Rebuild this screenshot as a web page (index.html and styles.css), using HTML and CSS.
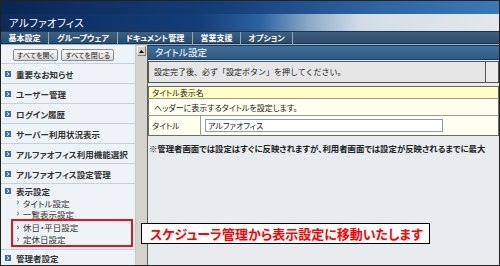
FILE: index.html
```html
<!DOCTYPE html>
<html lang="ja">
<head>
<meta charset="utf-8">
<title>アルファオフィス</title>
<link rel="stylesheet" href="styles.css">
</head>
<body>
<div class="frame">
  <div class="header"><span class="app-title">アルファオフィス</span></div>
  <div class="nav">
    <span class="nav-item w1">基本設定</span>
    <span class="nav-item w2">グループウェア</span>
    <span class="nav-item w3">ドキュメント管理</span>
    <span class="nav-item w4">営業支援</span>
    <span class="nav-item w5">オプション</span>
  </div>
  <div class="main">
    <aside class="sidebar">
      <div class="btns">
        <button class="btn">すべてを開く</button>
        <button class="btn">すべてを閉じる</button>
      </div>
      <ul class="menu">
        <li class="menu-item"><svg class="ico" viewBox="0 0 6 6"><rect x="0" y="0" width="6" height="6" fill="#3a6cae"/><polyline points="2,1.3 4,3 2,4.7" fill="none" stroke="#fff" stroke-width="1"/></svg>重要なお知らせ</li>
        <li class="menu-item"><svg class="ico" viewBox="0 0 6 6"><rect x="0" y="0" width="6" height="6" fill="#3a6cae"/><polyline points="2,1.3 4,3 2,4.7" fill="none" stroke="#fff" stroke-width="1"/></svg>ユーザー管理</li>
        <li class="menu-item"><svg class="ico" viewBox="0 0 6 6"><rect x="0" y="0" width="6" height="6" fill="#3a6cae"/><polyline points="2,1.3 4,3 2,4.7" fill="none" stroke="#fff" stroke-width="1"/></svg>ログイン履歴</li>
        <li class="menu-item"><svg class="ico" viewBox="0 0 6 6"><rect x="0" y="0" width="6" height="6" fill="#3a6cae"/><polyline points="2,1.3 4,3 2,4.7" fill="none" stroke="#fff" stroke-width="1"/></svg>サーバー利用状況表示</li>
        <li class="menu-item"><svg class="ico" viewBox="0 0 6 6"><rect x="0" y="0" width="6" height="6" fill="#3a6cae"/><polyline points="2,1.3 4,3 2,4.7" fill="none" stroke="#fff" stroke-width="1"/></svg>アルファオフィス利用機能選択</li>
        <li class="menu-item"><svg class="ico" viewBox="0 0 6 6"><rect x="0" y="0" width="6" height="6" fill="#3a6cae"/><polyline points="2,1.3 4,3 2,4.7" fill="none" stroke="#fff" stroke-width="1"/></svg>アルファオフィス設定管理</li>
        <li class="menu-group">
          <div class="menu-head"><svg class="ico" viewBox="0 0 6 6"><rect x="0" y="0" width="6" height="6" fill="#3a6cae"/><polyline points="2,1.3 4,3 2,4.7" fill="none" stroke="#fff" stroke-width="1"/></svg>表示設定</div>
          <div class="sub"><svg class="bul" viewBox="0 0 4 5"><polyline points="1,0.8 3,2.5 1,4.2" fill="none" stroke="#3f73b4" stroke-width="1"/></svg>タイトル設定</div>
          <div class="sub"><svg class="bul" viewBox="0 0 4 5"><polyline points="1,0.8 3,2.5 1,4.2" fill="none" stroke="#3f73b4" stroke-width="1"/></svg>一覧表示設定</div>
          <div class="hl">
            <div class="sub"><svg class="bul" viewBox="0 0 4 5"><polyline points="1,0.8 3,2.5 1,4.2" fill="none" stroke="#3f73b4" stroke-width="1"/></svg>休日・平日設定</div>
            <div class="sub"><svg class="bul" viewBox="0 0 4 5"><polyline points="1,0.8 3,2.5 1,4.2" fill="none" stroke="#3f73b4" stroke-width="1"/></svg>定休日設定</div>
          </div>
        </li>
        <li class="menu-item last"><svg class="ico" viewBox="0 0 6 6"><rect x="0" y="0" width="6" height="6" fill="#3a6cae"/><polyline points="2,1.3 4,3 2,4.7" fill="none" stroke="#fff" stroke-width="1"/></svg>管理者設定</li>
      </ul>
    </aside>
    <div class="scrollbar"><div class="sb-up"><svg viewBox="0 0 7 4" class="sb-arrow"><polygon points="0,4 3.5,0 7,4" fill="#000"/></svg></div></div>
    <section class="content">
      <div class="title-bar">タイトル設定</div>
      <div class="notice">
        <div class="notice-main">設定完了後、必ず「設定ボタン」を押してください。</div>
        <div class="notice-side"></div>
      </div>
      <table class="form">
        <tr><th colspan="2" class="form-head">タイトル表示名</th></tr>
        <tr><td colspan="2" class="form-desc">ヘッダーに表示するタイトルを設定します。</td></tr>
        <tr>
          <td class="form-label">タイトル</td>
          <td class="form-field"><input class="text-input" type="text" value="アルファオフィス"></td>
        </tr>
      </table>
      <p class="note">※管理者画面では設定はすぐに反映されますが、利用者画面では設定が反映されるまでに最大</p>
    </section>
  </div>
  <div class="callout">スケジューラ管理から表示設定に移動いたします</div>
</div>
</body>
</html>
```

FILE: styles.css
```css
* { box-sizing: border-box; }
html, body { margin: 0; padding: 0; }
body {
  font-family: "Noto Sans CJK JP", "Noto Sans", sans-serif;
  font-feature-settings: "palt";
  color: #222;
}
.frame {
  position: relative;
  width: 500px;
  height: 266px;
  border: 1px solid #222;
  overflow: hidden;
  background: #e9ecef;
}
.header {
  height: 30px;
  background:
    linear-gradient(to right, #0a2652 0%, #153f78 45%, #2c64a4 75%, #3a78b8 100%) top / 100% 13px no-repeat,
    linear-gradient(to right, #0c2b5b 0%, #143e77 40%, #2b62a0 52%, #8eaac8 62%, #d3dce6 72%, #e4e8ec 100%);
  display: flex;
  align-items: flex-end;
  padding: 0 0 1px 8px;
}
.app-title {
  color: #fff;
  font-size: 10.5px;
  line-height: 14px;
  letter-spacing: 0.3px;
}
.nav {
  height: 14px;
  display: flex;
  background: linear-gradient(#3b6080, #294b6b);
  border-bottom: 1px solid #9fb2c4;
  box-shadow: inset 0 -1px 0 #1b3450;
  border-top: 1px solid #1b3450;
}
.nav-item {
  color: #fff;
  font-weight: bold;
  font-size: 8px;
  line-height: 12px;
  text-align: center;
  border-right: 1px solid #93a9be;
  flex: none;
}
.w1 { width: 48px; }
.w2 { width: 69px; }
.w3 { width: 75px; }
.w4 { width: 48px; }
.w5 { width: 52px; }
.main {
  display: flex;
  height: 220px;
}
.sidebar {
  width: 134px;
  background: #eef3f8;
  flex: none;
}
.btns {
  height: 19px;
  padding: 4px 0 0 12px;
  display: flex;
  gap: 3px;
  border-bottom: 1px solid #c6d0db;
}
.btn {
  height: 12px;
  padding: 0 3px;
  font-family: inherit;
  font-feature-settings: "palt";
  font-size: 7px;
  line-height: 10px;
  color: #222;
  background: linear-gradient(#ffffff, #d8d8d8);
  border: 1px solid #8c8c8c;
  border-radius: 2px;
}
.menu {
  list-style: none;
  margin: 0;
  padding: 0;
}
.menu-item {
  height: 20px;
  border-bottom: 1px solid #c6d0db;
  display: flex;
  align-items: center;
  padding-left: 4px;
  font-size: 8.5px;
  font-weight: bold;
  color: #333;
  white-space: nowrap;
}
.menu-item.last { height: 15px; border-bottom: none; }
.ico { width: 6px; height: 6px; margin-right: 5px; flex: none; }
.menu-group {
  border-bottom: 1px solid #c6d0db;
  padding: 1px 0 2px;
}
.menu-head {
  display: flex;
  align-items: center;
  height: 12px;
  padding-left: 4px;
  font-size: 8.5px;
  font-weight: bold;
  color: #333;
}
.sub {
  display: flex;
  align-items: center;
  height: 11px;
  padding-left: 15px;
  font-size: 8.5px;
  color: #333;
  white-space: nowrap;
}
.bul { width: 4px; height: 5px; margin-right: 3px; flex: none; }
.hl {
  margin: 0 2px 0 10px;
  border: 2px solid #e8141b;
  padding: 0;
}
.hl .sub { padding-left: 3px; height: 12px; }
.scrollbar {
  width: 13px;
  flex: none;
  background: #d6d3cd;
  border-left: 1px solid #c0c8d0;
  border-right: 1px solid #5c5c5c;
  padding: 1px 1px 0 1px;
}
.sb-up {
  height: 10px;
  background: #d4d0c8;
  border: 1px solid;
  border-color: #fff #808080 #808080 #fff;
  display: flex;
  align-items: center;
  justify-content: center;
}
.sb-arrow { width: 5px; height: 3px; }
.content {
  flex: 1;
  min-width: 0;
  overflow: hidden;
  white-space: nowrap;
}
.title-bar {
  height: 15px;
  background: linear-gradient(#3d6f98, #2d5c85);
  border-top: 1px solid #1e3a56;
  border-bottom: 1px solid #1e3a56;
  color: #fff;
  font-size: 9.5px;
  line-height: 13px;
  padding-left: 7px;
}
.notice {
  display: flex;
  margin-top: 1px;
  height: 22px;
}
.notice-main {
  width: 338px;
  flex: none;
  background: #e6e6e6;
  border: 1px solid #555;
  font-size: 8px;
  font-feature-settings: normal;
  line-height: 20px;
  padding-left: 5px;
  color: #222;
}
.notice-side {
  flex: 1;
  background: #ebebeb;
  border: 1px solid #555;
  border-left: none;
}
.form {
  margin-top: 3px;
  width: 351px;
  border-collapse: collapse;
  border: 1px solid #6a6a6a;
}
.form td, .form th {
  padding: 0;
  font-weight: normal;
  text-align: left;
  font-size: 8px;
  color: #222;
}
.form-head {
  height: 12px;
  background: #ffffc6;
  border-bottom: 1px solid #9a9a9a;
  padding-left: 3px !important;
  line-height: 11px;
}
.form-desc {
  height: 17px;
  background: #fffff0;
  border-bottom: 1px solid #9a9a9a;
  padding-left: 5px !important;
}
.form-label {
  width: 52px;
  height: 20px;
  background: #fffff0;
  border-right: 1px solid #9a9a9a;
  padding-left: 3px !important;
}
.form-field {
  background: #fffff0;
  padding-left: 4px !important;
}
.text-input {
  display: block;
  width: 238px;
  height: 13px;
  border: 1px solid #7f9db9;
  background: #fff;
  font-family: inherit;
  font-feature-settings: "palt";
  font-size: 8px;
  padding: 0 2px;
  color: #222;
  margin: 0;
}
.note {
  margin: 6px 0 0 1px;
  font-size: 8.4px;
  line-height: 12px;
  font-weight: bold;
  color: #222;
}
.callout {
  position: absolute;
  left: 140px;
  top: 222px;
  width: 289px;
  height: 21px;
  border: 1px solid #000;
  background: #fff;
  color: #f00;
  font-weight: bold;
  font-size: 13px;
  line-height: 19px;
  padding-left: 8px;
  white-space: nowrap;
}
```
